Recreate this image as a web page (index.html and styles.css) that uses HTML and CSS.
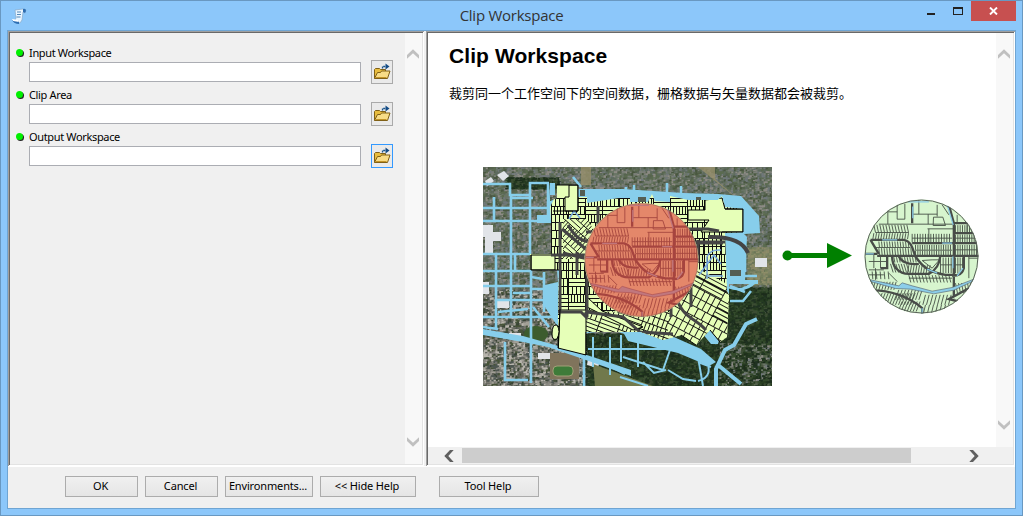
FILE: index.html
```html
<!DOCTYPE html>
<html lang="zh">
<head>
<meta charset="utf-8">
<title>Clip Workspace</title>
<link rel="stylesheet" href="styles.css">
</head>
<body>
<svg class="defs" width="0" height="0" aria-hidden="true">
  <defs>
    <symbol id="folder" viewBox="0 0 18 18">
      <path d="M1.500 15.500V6.500l1-1h4l1 1h5v3" fill="#e9bd3e" stroke="#806016"/>
      <path d="M1.500 15.500l3-6h3l1-1.500h8.500l-2.500 7.500z" fill="#f8dc86" stroke="#806016"/>
      <path d="M2.500 14.500h11" stroke="#c39428"/>
      <path d="M9.500 5.500V3.500h4" fill="none" stroke="#1c568c" stroke-width="1.300" stroke-dasharray="2 .7"/>
      <path d="M12.500 .5l4 3-4 3z" fill="#124b85"/>
    </symbol>
    <symbol id="chev" viewBox="0 0 12 10"><path d="M0 6L6 .3l6 5.700v3.700L6 4.300 0 9.700z"/></symbol>
    <clipPath id="disc"><circle r="57"/></clipPath>
    <g id="network" clip-path="url(#disc)">
      <g transform="scale(.33333) translate(-438 -200)" fill="none">
        <path id="circleParcels" class="hair"/>
        <path class="hair" d="M310 103H535M337 60V103M365 42V88M388 42V88M365 88H388M338 66H365M412 73H485M430 30V73M458 73V103M485 45V80M474 82H502L510 107H473ZM456 117H535M500 45L520 75M300 128H400M460 117V160M545 75V100M575 100V130M295 195V235M315 195V235M280 240H325M280 255H325M280 215H335M300 235V270M580 200V265M580 205H608M340 250L365 275M470 210H492L470 235L440 212Z"/>
        <path class="road" d="M285 150H385C412 155 412 185 420 200C440 230 460 248 510 255H540M270 192H305M305 198H610M410 160H610M535 100V325M535 130H605M535 100H580M350 195C348 230 370 252 400 252H460C480 242 492 225 494 200M370 200C380 220 400 225 430 222M285 150L310 192M565 200V235Q560 258 530 258M335 198V235H315M410 40V100M520 45L535 100M285 302C340 300 400 320 440 355V375M580 295L520 328L550 335"/>
        <path class="stream" d="M398 36H460M515 45L533 105M412 50V85M320 150H365M500 160H530M270 192H295M532 200V235M455 238L485 250M545 258L562 235M440 355V372"/>
        <path class="river" d="M285 270L370 288L380 279L410 288L470 304L530 293L595 268L595 273L535 301L475 312L405 298L360 296L285 275Z"/>
      </g>
    </g>
    <clipPath id="parcelClip"><path d="M74 18L95 18V30H104V36L136 31L147 31V35H165L169 27L172 34L187 35V29L205 33H235L239 29L242 40L260 42V65L242 66L244 124L246 128L244 170L237 175L227 163L213 178L198 168L180 173L158 165H103V188L75 181V142L76 103H47V87H68V55L67 40L71 32L74 31Z"/></clipPath>
    <clipPath id="eastClip"><path d="M208 98L246 118V180H208L185 172V150Z"/></clipPath>
    <clipPath id="southClip"><path d="M103 143L150 146L190 145L210 185H103Z"/></clipPath>
    <clipPath id="westClip"><path d="M80 52L104 52L118 74L106 92H80Z"/></clipPath>
  </defs>
</svg>

<div class="window">
  <header class="titlebar">
    <svg class="app-icon" width="16" height="17" viewBox="0 0 16 17">
      <path d="M4 2l8-1 3 1-1 3-2-1-1 8-2 3-6-1 2-4z" fill="#e9f5ff" stroke="#86a9c9" stroke-width=".7"/>
      <path d="M12 1q3-1 3 2l-1 2-2-1zM1 12l7 1v3q-5 0-7-4z" fill="#2d6eb3"/>
      <path d="M1 11l6 1 1 2-6-1z" fill="#fff"/>
      <path d="M6 4h4M6 6.500h4M5.500 9h4" stroke="#5588b8"/>
    </svg>
    <h1 class="title">Clip Workspace</h1>
    <div class="controls">
      <span class="ctl min"><i></i></span>
      <span class="ctl max"><i></i></span>
      <span class="ctl close"><svg width="9" height="8" viewBox="0 0 9 8"><path d="M1 .5l7 7M8 .5l-7 7" stroke="#fff" stroke-width="1.900"/></svg></span>
    </div>
  </header>

  <div class="client">
    <div class="panes">
      <section class="pane form-pane">
        <div class="form">
          <div class="field"><label><i class="dot"></i>Input Workspace</label><div class="row"><input type="text"><button class="browse"><svg width="18" height="18"><use href="#folder"/></svg></button></div></div>
          <div class="field"><label><i class="dot"></i>Clip Area</label><div class="row"><input type="text"><button class="browse"><svg width="18" height="18"><use href="#folder"/></svg></button></div></div>
          <div class="field"><label><i class="dot"></i>Output Workspace</label><div class="row"><input type="text"><button class="browse active"><svg width="18" height="18"><use href="#folder"/></svg></button></div></div>
        </div>
        <div class="vbar"><svg width="12" height="10"><use href="#chev"/></svg><svg class="down" width="12" height="10"><use href="#chev"/></svg></div>
      </section>

      <section class="pane help-pane">
        <div class="help-main">
          <article class="help">
            <h2>Clip Workspace</h2>
            <p>裁剪同一个工作空间下的空间数据，栅格数据与矢量数据都会被裁剪。</p>
            <svg class="figure" width="500" height="219" viewBox="0 0 500 219">
              <svg width="289" height="219" viewBox="0 0 289 219">
                <rect width="289" height="219" fill="#667064"/>
                <g id="aerial"></g>
                <ellipse cx="53" cy="167" rx="12" ry="8" fill="#3d5c2e"/>
                <rect x="67" y="186" width="29" height="26" fill="#80745c"/>
                <rect x="70" y="199" width="20" height="10" rx="4" fill="#3e7b39" stroke="#a2a078"/>
                <path d="M14 8l7-4 5 5-6 5zM2 14l6-4 3 4-7 5zM0 58h10v7h8v9H10v14H2V70H0zM105 191l12 2-2 8-11-3zM55 186h12v6H55zM26 166h12v6H26zM272 91h12v9h-12zM14 134h12v7H14zM0 115h6v12H0z" fill="#e1e4e8"/>
                <path d="M110 197L170 219H112Z" fill="#71794c"/>
                <path d="M98 0h10v18H98zM215 0L262 38L232 12V0Z" fill="#968f6a" opacity=".8"/>
                <g class="water-line">
                  <path d="M0 17H27V28H47V16H66M0 41H70M0 54H70M0 87H48M11 30V54M28 28V150M47 26V87M65 16V55M28 31H50M13 87V162M48 103V162M61 105V145M0 119H48M12 133H62M0 150H70M28 104H48M30 126H48M48 160V216M22 175V213H45M32 88V103M101 190V219M0 160L15 162"/>
                  <path d="M48 110L60 112M48 122H65M15 145L45 142M0 104H28M50 140L66 160M98 20L90 10"/>
                  <path d="M110 170V200M127 170V208M138 168V195M105 182H185M155 170V200M140 190L180 203L188 180M160 195L171 206L183 203M185 203L200 212L213 214M215 190L220 219M215 195L228 200M222 190Q232 210 215 214M137 210L165 219M128 200L142 207" stroke-width="2"/>
                  <path d="M249 109H274M247 119L262 125M247 134H260L268 124M250 105V85M262 105V88M143 27V20M151 27V18M184 26V16M198 27V19"/>
                </g>
                <path class="water" d="M67 16H72V28H67V40H77V56H54V48H65ZM96 22L140 22L200 26L235 27L258 29L276 49L277 66L261 67L264 70L262 113H275V117H246V130L243 147L235 177H228L218 165L150 170L130 163L105 166L82 170L73 157L62 140L62 118L75 115L70 55L65 35ZM0 162L40 169L72 178L110 190L148 203V209L100 192L65 180L40 175L0 168ZM140 165L184 167L218 182L233 195L226 199L195 186L145 174Z"/>
                <path d="M274 152L263 157L251 178L242 183L233 202V219M235 198L258 217" fill="none" stroke="#87ceeb" stroke-width="4"/>
                <path d="M244 113L260 115H275V117H245ZM244 121Q262 128 274 115L270 114Q259 125 244 119Z" fill="#87ceeb"/>
                <path d="M75 19h10v13H75zM155 30h8v6h-8zM213 30h5v4h-5zM247 103h11v6h-11zM97 23h5v6h-5z" fill="#545e53"/>
                <g clip-path="url(#parcelClip)">
                  <rect width="289" height="219" fill="#e6ffb8"/>
                  <path id="gridLots" class="lot"/>
                  <g clip-path="url(#westClip)"><rect x="60" y="45" width="70" height="60" fill="#e6ffb8"/><path id="westLots" class="lot slanted" transform="rotate(42 90 70)"/></g>
                  <g clip-path="url(#southClip)"><rect x="90" y="130" width="130" height="60" fill="#e6ffb8"/><path id="southLots" class="lot slanted" transform="rotate(20 150 150)"/></g>
                  <g clip-path="url(#eastClip)"><rect x="180" y="90" width="80" height="90" fill="#e6ffb8"/><path id="eastLots" class="lot slanted" transform="rotate(28 220 140)"/></g>
                  <path d="M86 18h9v26H82V30h4zM48 88H72V103H48ZM77 143H103V188H75ZM239 31L242 42L260 42V65H218L226 53H205V43H222V33ZM104 130L119 144L145 154L160 160L150 163L104 140Z" fill="#e6ffb8" stroke="#000"/>
                  <path class="avenue" d="M77 55V145M68 88H105M60 106H78M61 115H78M61 125H78M61 145H98L103 150V145M104 145L140 150L157 165L190 167M94 85V108M104 107V150M115 39V65H103M187 62H225L236 64M190 75L242 75M187 90H215M85 58C92 70 98 76 115 75M79 62L105 84M80 86L105 92M190 76H240M215 73V95M208 105V140M190 122C200 155 210 148 223 163M188 120V150"/>
                  <path d="M224 112V90Q227 82 238 83M216 108L231 88L238 97M225 109H240M86 52L91 44L97 51" class="creek"/>
                </g>
                <path d="M74 18H95V44H70M242 42H260V65H239M48 88V103H76M77 142L75 181L103 188V165M213 178L198 168M237 175L227 163" fill="none" stroke="#000"/>
                <path d="M69 167q0-10 5-9 4 6 0 14-5 2-5-5z" fill="#e6ffb8" stroke="#000"/>
                <path d="M225 70Q258 69 265 86" fill="none" stroke="#444" stroke-width="4"/>
                <g transform="translate(158.500 93)">
                  <circle r="57" fill="#e8f7b8"/>
                  <use href="#network"/>
                  <circle r="56.500" fill="#e24039" fill-opacity=".61" stroke="#9c6754" stroke-width=".7"/>
                </g>
              </svg>
              <g fill="green"><circle cx="304.500" cy="88.500" r="5"/><path d="M304 86h40V76l25 12.500-25 12.500V91h-40z"/></g>
              <g transform="translate(438.500 89.500)"><circle r="57" fill="#d7f5ce"/><use href="#network"/><circle r="56.500" fill="none" stroke="#596159"/></g>
            </svg>
          </article>
          <div class="vbar"><svg width="12" height="10"><use href="#chev"/></svg><svg class="down" width="12" height="10"><use href="#chev"/></svg></div>
        </div>
        <div class="hbar">
          <svg class="left" width="12" height="10"><use href="#chev"/></svg>
          <div class="track"><div class="thumb"></div></div>
          <svg class="right" width="12" height="10"><use href="#chev"/></svg>
        </div>
      </section>
    </div>
    <footer class="actions">
      <button>OK</button><button>Cancel</button><button class="env">Environments...</button><button class="hide">&lt;&lt; Hide Help</button><button class="tool">Tool Help</button>
    </footer>
  </div>
</div>
<script src="map.js"></script>
</body>
</html>
```
FILE: styles.css
```css
* { box-sizing: border-box; }
body { margin: 0; overflow: hidden; font: 11px/14px "Noto Sans", sans-serif; color: #000; }
.defs { position: absolute; }
svg { display: block; }
.window { width: 1023px; height: 516px; padding: 0 6px 6px; background: #8cc7fa; border: 1px solid #6998c1; display: flex; flex-direction: column; }
.titlebar { height: 29px; flex: none; display: grid; grid-template-columns: 100px 1fr 100px; margin-right: -1px; }
.app-icon { margin: 7px 0 0 4px; }
.title { margin: 4px 0 0; padding-right: 1px; font: 400 15px/21px "Open Sans", sans-serif; letter-spacing: -.25px; text-align: center; color: #333; }
.controls { display: flex; justify-content: flex-end; height: 20px; padding-right: 1px; }
.ctl { display: flex; justify-content: center; width: 27px; }
.min i { width: 8px; height: 2px; background: #222; margin-top: 12px; }
.max i { width: 10px; height: 8px; border: 1px solid #222; border-top-width: 2px; margin-top: 6px; }
.close { width: 45px; background: #c75050; align-items: center; }
.client { flex: 1; border: 1px solid #6fa5d3; background: #f0f0f0; display: flex; flex-direction: column; }
.panes { display: flex; height: 435px; gap: 2px; }
.pane { display: flex; padding: 2px; box-shadow: inset 1px 1px #a0a0a0, inset -1px -1px #fff, inset 2px 2px #696969, inset -2px -2px #e3e3e3; }
.form-pane { width: 416px; }
.form { flex: 1; padding: 13px 12px 0 6px; }
.field { height: 42px; }
.field label { display: flex; align-items: center; height: 14px; gap: 6px; letter-spacing: -.35px; }
.dot { width: 7px; height: 7px; margin-top: -2px; border-radius: 50%; background: #00f000; box-shadow: 1px 1px 0 #222; }
.row { display: flex; justify-content: space-between; padding-left: 13px; align-items: center; height: 24px; }
.row input { width: 332px; height: 20px; border: 1px solid #abadb3; background: #fff; padding: 0; }
.browse { width: 22px; height: 24px; padding: 0 0 0 1px; background: #eaeaea; border: 1px solid #aaa; }
.browse.active { border-color: #3399ff; }
.vbar { width: 17px; background: #f8f8f8; display: flex; flex-direction: column; justify-content: space-between; align-items: flex-start; padding: 16px 0 17px 2px; fill: #c0c0c0; }
.down { transform: rotate(180deg); }
.help-pane { flex: 1; flex-direction: column; background: #fff; }
.help-main { flex: 1; display: flex; min-height: 0; }
.help { flex: 1; padding: 11px 0 0 21px; }
.help h2 { margin: 0; font: 700 21px/24px "Liberation Sans", Arial, sans-serif; letter-spacing: .08px; }
.help p { margin: 15px 0 0; font: 13px/20px "Noto Sans CJK SC", sans-serif; white-space: nowrap; }
.figure { margin: 64px 0 0 34px; }
.hbar { height: 17px; background: #f0f0f0; display: flex; align-items: center; padding: 0 33px 0 15px; fill: #606060; }
.left { transform: rotate(-90deg); }
.right { transform: rotate(90deg); }
.track { flex: 1; padding: 1px 0 1px 7px; }
.thumb { width: 449px; height: 15px; background: #cdcdcd; }
.actions { flex: 1; display: flex; gap: 7px; padding: 9px 0 0 57px; border-top: 1px solid #fff; }
.actions button { width: 73px; height: 21px; padding: 0 2px 2px 0; border: 1px solid #acacac; background: linear-gradient(#f0f0f0, #e5e5e5); font: inherit; letter-spacing: -.15px; color: #000; }
.actions .env { width: 88px; }
.actions .hide { width: 96px; }
.actions .tool { width: 100px; margin-left: 16px; }
.hair { stroke: #465046; stroke-width: 2.7; }
.road { stroke: #484c48; stroke-width: 7; }
.stream { stroke: #8ac9e5; stroke-width: 4; }
.river { fill: #8cceea; stroke: #596872; stroke-width: 2; }
.lot { fill: none; stroke: #111; stroke-width: 1; shape-rendering: crispEdges; }
.slanted { shape-rendering: auto; stroke-width: .9; }
.avenue { fill: none; stroke: #444; stroke-width: 3; }
.creek { fill: none; stroke: #77a9df; stroke-width: 1.5; }
.water { fill: #87ceeb; }
.water-line { fill: none; stroke: #87ceeb; stroke-width: 2.6; }
```
FILE: map.js
```js
let seed = 17;
const rnd = () => (seed = (seed * 16807) % 2147483647) / 2147483647;

// Rooftops, trees and pavement of the aerial photo.
const urban = ['#56634f', '#6a7666', '#7b7f78', '#70787a', '#49573f', '#8d8b84', '#5e6b5f', '#5b6b50'];
const industrial = ['#4e5752', '#77776f', '#a3a097', '#62645b', '#3a4636', '#8a8982', '#b8b5ad', '#475439'];
const forest = ['#1f321d', '#293e22', '#1c2c1b', '#344b2c', '#243a20', '#3c4d33', '#203222'];
const field = ['#8d8e68', '#77805d', '#8b8867', '#6b7658', '#7e8467'];
let aerial = '';
for (let y = 0; y < 219; y += 2) {
  for (let x = 0; x < 289; x += 2) {
    let tones = y > 120 && x < 110 ? industrial : urban;
    if (x > 100 && y > 165 || x > 235 && y > 118) tones = forest;
    if (x > 235 && y > 175 && rnd() < .35) tones = urban;
    if (x > 262 && y > 78 && y < 118) tones = field;
    if (x < 75 && y > 8 && y < 22 && x > 20) tones = forest;
    const c = tones[Math.floor(rnd() * tones.length)];
    aerial += `<rect x="${x + rnd()}" y="${y + rnd()}" width="${2 + rnd() * 3}" height="${2 + rnd() * 2}" fill="${c}"/>`;
  }
}
document.getElementById('aerial').innerHTML = aerial;

// City lots: rows of narrow parcels in street blocks.
function lots(x0, y0, x1, y1, blockW, rowH, steps) {
  let d = '';
  for (let by = y0; by < y1; by += rowH) {
    d += `M${x0} ${by + .5}H${x1}`;
    for (let bx = x0; bx < x1; bx += blockW) {
      d += `M${bx + .5} ${by}v${rowH}`;
      if (rnd() < .72) {
        const step = steps[Math.floor(rnd() * steps.length)];
        for (let x = bx + step; x < bx + blockW; x += step) d += `M${x + .5} ${by}v${rowH}`;
      } else {
        for (let y = by + 4; y < by + rowH; y += 4) d += `M${bx} ${y + .5}h${blockW}`;
      }
    }
  }
  return d;
}
const draw = (id, ...area) => document.getElementById(id).setAttribute('d', lots(...area));
draw('gridLots', 68, 31, 248, 178, 17, 8, [3, 4, 4, 5]);
draw('westLots', 50, 30, 130, 110, 20, 8, [3, 4]);
draw('southLots', 80, 110, 240, 200, 20, 8, [4, 5]);
draw('eastLots', 160, 80, 280, 200, 24, 9, [6, 8]);

// Lot lines inside the clipping circle: x range, y range, spacing, slant.
const rows = [
  [295, 400, 105, 128, 9, 5], [295, 405, 130, 148, 8, -3], [410, 530, 132, 158, 8, 0],
  [540, 605, 106, 128, 7, 0], [540, 605, 134, 157, 7, 0], [310, 405, 155, 173, 8, 2],
  [310, 410, 175, 196, 8, 2], [420, 530, 165, 180, 7, 0], [420, 530, 182, 196, 7, 0],
  [540, 605, 165, 196, 7, 0], [355, 420, 202, 218, 8, 3], [345, 395, 222, 248, 8, 8],
  [400, 470, 226, 250, 8, -4], [495, 530, 203, 250, 8, 0], [540, 562, 203, 250, 7, 0],
  [400, 530, 256, 278, 10, 6], [290, 370, 276, 300, 9, -7], [370, 450, 300, 330, 10, -10],
  [450, 530, 315, 345, 11, -8], [540, 590, 280, 310, 9, 6], [320, 420, 310, 345, 9, -14],
  [380, 435, 335, 365, 9, -12], [290, 345, 245, 268, 12, 2], [450, 520, 345, 370, 12, -6]
];
let d = '';
for (const [x1, x2, y1, y2, step, slant] of rows) {
  for (let x = x1; x < x2; x += step) d += `M${x} ${y1}l${slant} ${y2 - y1}`;
}
d += 'M300 173H405M420 181H530M540 145H605M540 180H605M540 225H562M495 225H530M410 145H530M400 265H530';
document.getElementById('circleParcels').setAttribute('d', d);
```
